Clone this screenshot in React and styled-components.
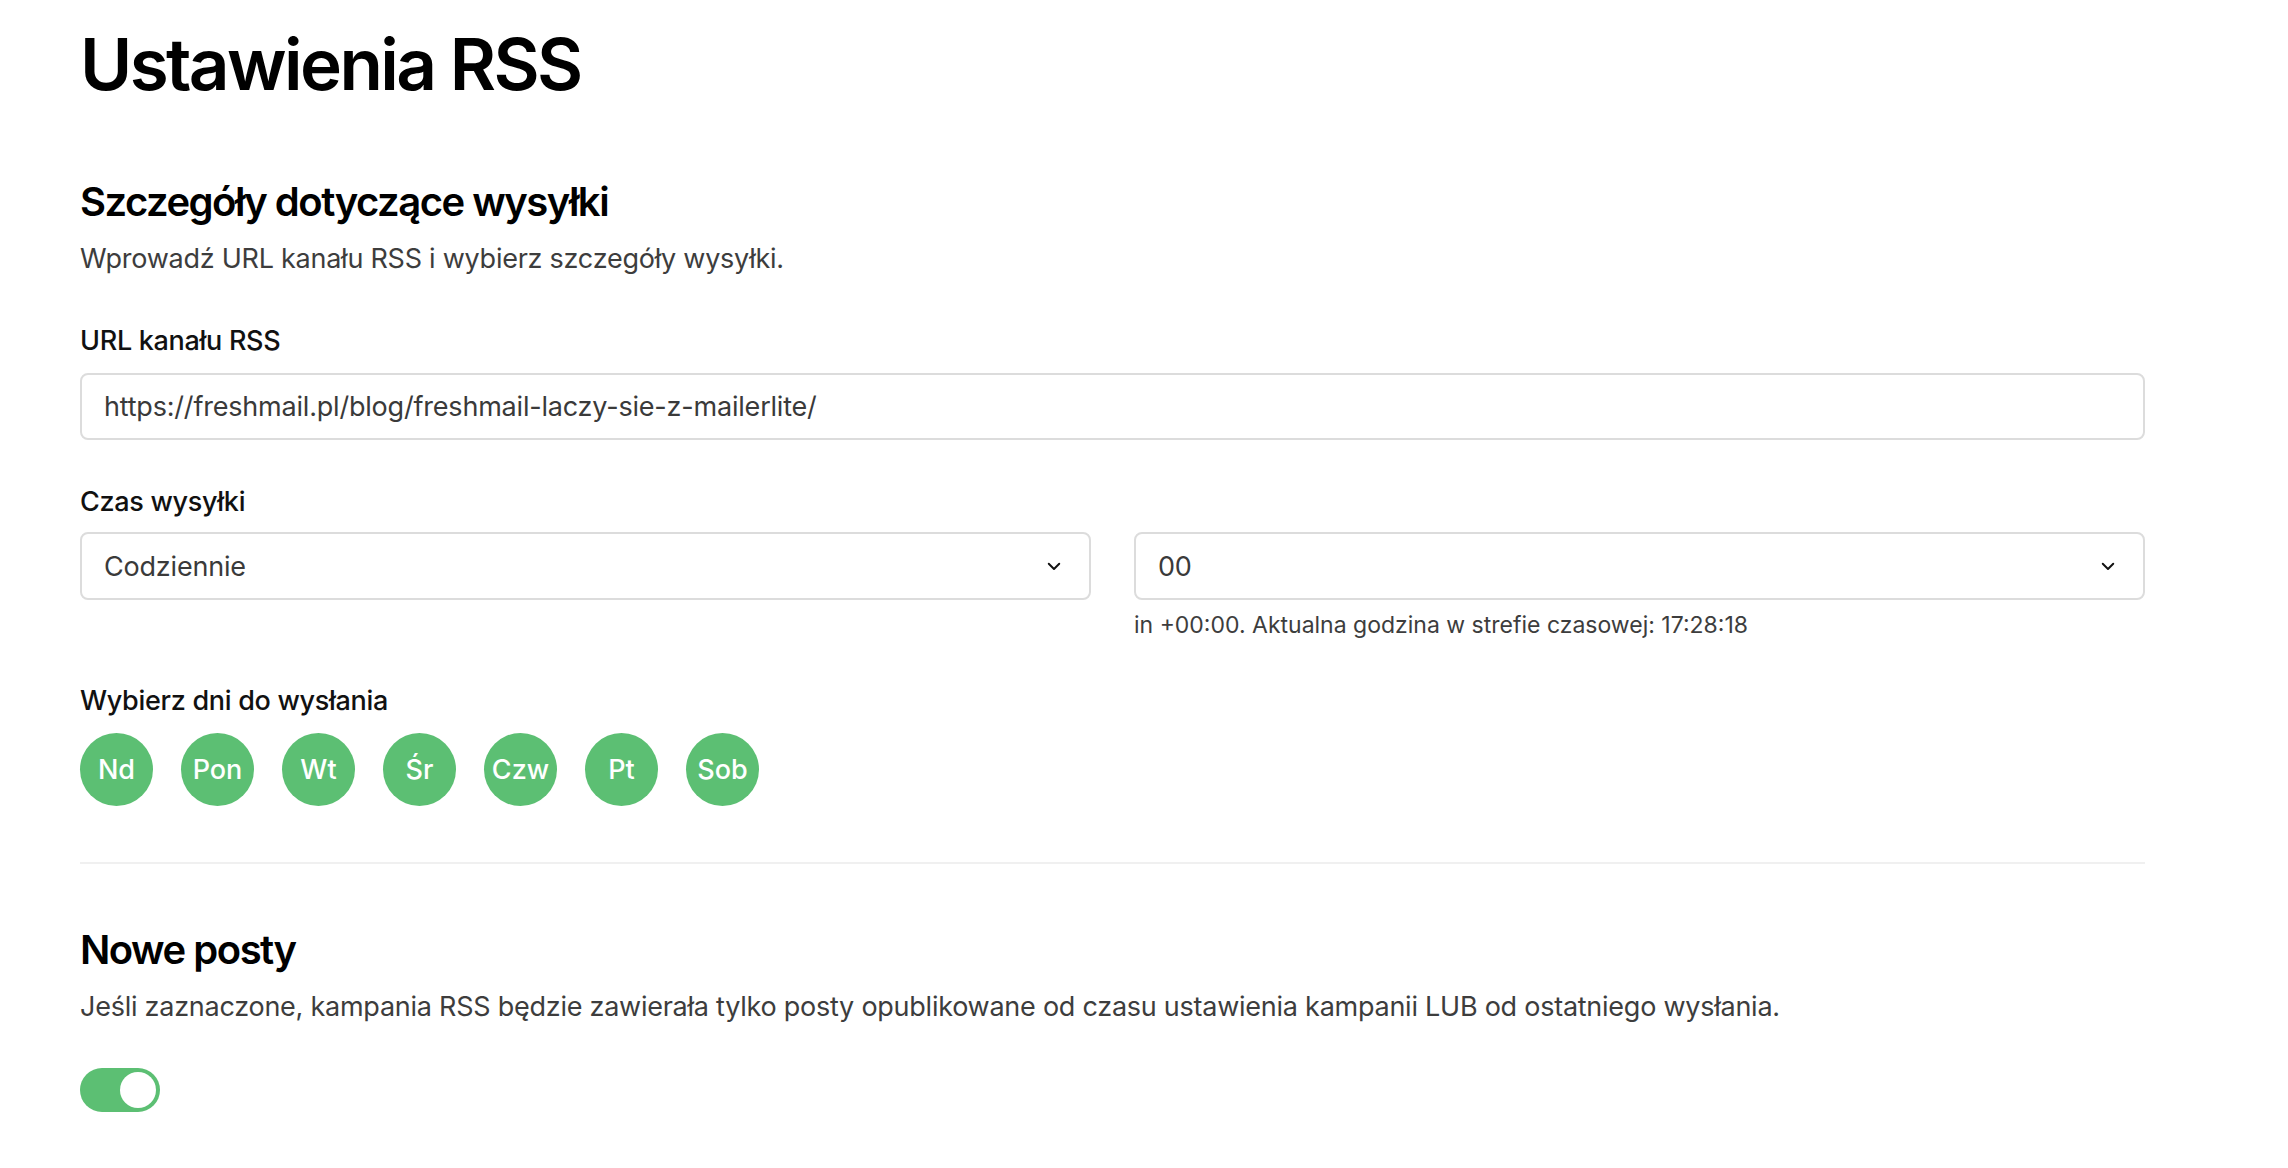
import React, { useState } from "react";
import styled, { createGlobalStyle } from "styled-components";

const GlobalStyle = createGlobalStyle`
  html, body {
    margin: 0;
    padding: 0;
    background: #ffffff;
  }
  body {
    font-family: Inter, "Noto Sans", "Liberation Sans", sans-serif;
    color: #111111;
    -webkit-font-smoothing: antialiased;
  }
  * {
    box-sizing: border-box;
  }
`;

const Page = styled.div`
  padding: 21px 80px 60px 80px;
`;

const Content = styled.div`
  width: 2065px;
`;

const Title = styled.h1`
  margin: 0;
  font-size: 71px;
  line-height: 86px;
  font-weight: 600;
  letter-spacing: -2.6px;
  color: #000000;
`;

const Section = styled.section`
  margin-top: ${(p) => p.$top || 0}px;
`;

const SectionTitle = styled.h2`
  margin: 0;
  font-size: 40px;
  line-height: 48px;
  font-weight: 600;
  letter-spacing: -1.5px;
  color: #000000;
`;

const Description = styled.p`
  margin: 13px 0 0 0;
  font-size: 27px;
  line-height: 40px;
  color: #3d3d3d;
  letter-spacing: -0.25px;
`;

const Field = styled.div`
  margin-top: ${(p) => p.$top || 42}px;
`;

const Label = styled.label`
  display: block;
  font-size: 27px;
  line-height: 40px;
  font-weight: 500;
  color: #111111;
  letter-spacing: -0.3px;
  margin-bottom: ${(p) => p.$gap ?? 12}px;
`;

const TextInput = styled.input`
  display: block;
  width: 100%;
  height: 67px;
  padding: 0 22px;
  border: 2px solid #dcdcdc;
  border-radius: 8px;
  font-family: inherit;
  font-size: 27px;
  color: #3a3a3a;
  letter-spacing: -0.2px;
  background: #ffffff;
  outline: none;
`;

const SelectGrid = styled.div`
  display: grid;
  grid-template-columns: 1fr 1fr;
  column-gap: 43px;
`;

const SelectBox = styled.div`
  display: flex;
  align-items: center;
  justify-content: space-between;
  height: 68px;
  padding: 0 22px 0 22px;
  border: 2px solid #dcdcdc;
  border-radius: 8px;
  font-size: 27px;
  color: #3a3a3a;
  letter-spacing: -0.2px;
  background: #ffffff;
`;

const Chevron = styled.svg`
  width: 18px;
  height: 18px;
  margin-right: 4px;
  flex: none;
`;

const Hint = styled.div`
  margin-top: 9px;
  font-size: 23px;
  line-height: 32px;
  color: #3d3d3d;
  letter-spacing: 0px;
`;

const Days = styled.div`
  display: flex;
  gap: 28px;
`;

const Day = styled.button`
  width: 73px;
  height: 73px;
  border-radius: 50%;
  border: none;
  padding: 0;
  background: ${(p) => (p.$active ? "#5cbf73" : "#e6e6e6")};
  color: ${(p) => (p.$active ? "#ffffff" : "#3a3a3a")};
  font-family: inherit;
  font-size: 27px;
  font-weight: 500;
  letter-spacing: 0px;
  cursor: pointer;
`;

const Divider = styled.hr`
  margin: 56px 0 0 0;
  border: none;
  border-top: 2px solid #f0f0f0;
`;

const Toggle = styled.button`
  display: flex;
  align-items: center;
  justify-content: ${(p) => (p.$on ? "flex-end" : "flex-start")};
  width: 80px;
  height: 44px;
  padding: 4px;
  border: none;
  border-radius: 22px;
  background: ${(p) => (p.$on ? "#5cbf73" : "#d0d0d0")};
  margin-top: 41px;
  cursor: pointer;
`;

const Knob = styled.span`
  width: 36px;
  height: 36px;
  border-radius: 50%;
  background: #ffffff;
`;

function Select({ value }) {
  return (
    <SelectBox>
      <span>{value}</span>
      <Chevron viewBox="0 0 24 24" fill="none" stroke="#111" strokeWidth="2.6" strokeLinecap="round" strokeLinejoin="round">
        <path d="M5 9l7 7 7-7" />
      </Chevron>
    </SelectBox>
  );
}

const DAYS = ["Nd", "Pon", "Wt", "Śr", "Czw", "Pt", "Sob"];

export default function App() {
  const [url, setUrl] = useState("https://freshmail.pl/blog/freshmail-laczy-sie-z-mailerlite/");
  const [on, setOn] = useState(true);

  return (
    <Page>
      <GlobalStyle />
      <Content>
        <Title>Ustawienia RSS</Title>

        <Section $top={71}>
          <SectionTitle>Szczegóły dotyczące wysyłki</SectionTitle>
          <Description>Wprowadź URL kanału RSS i wybierz szczegóły wysyłki.</Description>

          <Field>
            <Label>URL kanału RSS</Label>
            <TextInput value={url} onChange={(e) => setUrl(e.target.value)} />
          </Field>

          <Field $top={42}>
            <Label $gap={10}>Czas wysyłki</Label>
            <SelectGrid>
              <div>
                <Select value="Codziennie" />
              </div>
              <div>
                <Select value="00" />
                <Hint>in +00:00. Aktualna godzina w strefie czasowej: 17:28:18</Hint>
              </div>
            </SelectGrid>
          </Field>

          <Field $top={40}>
            <Label>Wybierz dni do wysłania</Label>
            <Days>
              {DAYS.map((d) => (
                <Day key={d} $active>{d}</Day>
              ))}
            </Days>
          </Field>
        </Section>

        <Divider />

        <Section $top={62}>
          <SectionTitle>Nowe posty</SectionTitle>
          <Description>
            Jeśli zaznaczone, kampania RSS będzie zawierała tylko posty opublikowane od czasu ustawienia kampanii LUB od ostatniego wysłania.
          </Description>
          <Toggle $on={on} onClick={() => setOn(!on)}>
            <Knob />
          </Toggle>
        </Section>
      </Content>
    </Page>
  );
}
